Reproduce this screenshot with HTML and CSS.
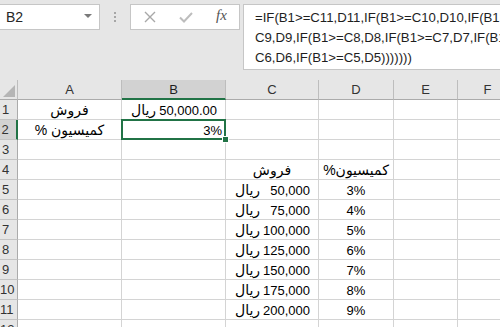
FILE: index.html
```html
<!DOCTYPE html>
<html>
<head>
	<title>Book1 - Excel</title>
	<link rel="stylesheet" href="styles.css">
</head>
<body>
	<div class="bar">
		<div class="namebox"><span>B2</span><i class="caret"></i></div>
		<div class="grip"><i></i><i></i><i></i></div>
		<div class="btns">
			<svg width="12" height="12" viewBox="0 0 12 12"><path d="M1 1L11 11M11 1L1 11" stroke="#a8a8a8" stroke-width="1.4" fill="none"/></svg>
			<svg width="14" height="11" viewBox="0 0 14 11"><path d="M1 5.5L5 9.5L13 1" stroke="#bdbdbd" stroke-width="2" fill="none"/></svg>
			<span class="fx">fx</span>
		</div>
		<div class="formula">
			<div>=IF(B1&gt;=C11,D11,IF(B1&gt;=C10,D10,IF(B1&gt;=</div>
			<div>C9,D9,IF(B1&gt;=C8,D8,IF(B1&gt;=C7,D7,IF(B1&gt;=</div>
			<div>C6,D6,IF(B1&gt;=C5,D5)))))))</div>
		</div>
	</div>

	<div class="sheet">
		<!-- column headers -->
		<div class="hd corner"><i></i></div>
		<div class="hd">A</div>
		<div class="hd on">B</div>
		<div class="hd">C</div>
		<div class="hd">D</div>
		<div class="hd">E</div>
		<div class="hd">F</div>

		<div class="rh">1</div>
		<div class="c mid fa">فروش</div>
		<div class="c acc"><span class="fa">ریال</span><span>50,000.00</span></div>
		<div class="c"></div><div class="c"></div><div class="c"></div><div class="c"></div>

		<div class="rh on">2</div>
		<div class="c mid fa" dir="rtl">کمیسیون %</div>
		<div class="c right sel">3%</div>
		<div class="c"></div><div class="c"></div><div class="c"></div><div class="c"></div>

		<div class="rh">3</div>
		<div class="c"></div><div class="c"></div><div class="c"></div><div class="c"></div><div class="c"></div><div class="c"></div>

		<div class="rh">4</div>
		<div class="c"></div><div class="c"></div>
		<div class="c mid fa">فروش</div>
		<div class="c mid fa" dir="rtl">کمیسیون%</div>
		<div class="c"></div><div class="c"></div>

		<div class="rh">5</div>
		<div class="c"></div><div class="c"></div>
		<div class="c acc"><span class="fa">ریال</span><span>50,000</span></div>
		<div class="c mid">3%</div>
		<div class="c"></div><div class="c"></div>

		<div class="rh">6</div>
		<div class="c"></div><div class="c"></div>
		<div class="c acc"><span class="fa">ریال</span><span>75,000</span></div>
		<div class="c mid">4%</div>
		<div class="c"></div><div class="c"></div>

		<div class="rh">7</div>
		<div class="c"></div><div class="c"></div>
		<div class="c acc"><span class="fa">ریال</span><span>100,000</span></div>
		<div class="c mid">5%</div>
		<div class="c"></div><div class="c"></div>

		<div class="rh">8</div>
		<div class="c"></div><div class="c"></div>
		<div class="c acc"><span class="fa">ریال</span><span>125,000</span></div>
		<div class="c mid">6%</div>
		<div class="c"></div><div class="c"></div>

		<div class="rh">9</div>
		<div class="c"></div><div class="c"></div>
		<div class="c acc"><span class="fa">ریال</span><span>150,000</span></div>
		<div class="c mid">7%</div>
		<div class="c"></div><div class="c"></div>

		<div class="rh">10</div>
		<div class="c"></div><div class="c"></div>
		<div class="c acc"><span class="fa">ریال</span><span>175,000</span></div>
		<div class="c mid">8%</div>
		<div class="c"></div><div class="c"></div>

		<div class="rh">11</div>
		<div class="c"></div><div class="c"></div>
		<div class="c acc"><span class="fa">ریال</span><span>200,000</span></div>
		<div class="c mid">9%</div>
		<div class="c"></div><div class="c"></div>

		<div class="rh">12</div>
		<div class="c"></div><div class="c"></div><div class="c"></div><div class="c"></div><div class="c"></div><div class="c"></div>
	</div>
</body>
</html>
```

FILE: styles.css
```css
body {
	margin:0;
	width:500px;
	height:327px;
	overflow:hidden;
	background:#e6e6e6;
	font-family:"Liberation Sans","DejaVu Sans",sans-serif;
	color:#000;
}

/* formula bar */
.bar {
	display:flex;
	align-items:flex-start;
	height:76px;
	padding-top:4px;
}
.namebox {
	box-sizing:border-box;
	width:101px;
	height:26px;
	margin-left:-1px;
	padding:0 7px 0 6px;
	display:flex;
	align-items:center;
	justify-content:space-between;
	background:#fff;
	border:1px solid #c6c6c6;
	font-size:14px;
	color:#262626;
}
.caret {
	width:0;
	height:0;
	border-left:4px solid transparent;
	border-right:4px solid transparent;
	border-top:4px solid #7a7a7a;
	margin-top:-2px;
}
.grip {
	width:30px;
	height:26px;
	display:flex;
	flex-direction:column;
	align-items:center;
	justify-content:center;
	gap:2px;
}
.grip i {
	width:2px;
	height:2px;
	background:#a6a6a6;
}
.btns {
	box-sizing:border-box;
	width:110px;
	height:26px;
	padding-left:13px;
	display:flex;
	align-items:center;
	gap:23px;
	background:#fff;
	border:1px solid #c6c6c6;
}
.fx {
	font-family:"Liberation Serif",serif;
	font-style:italic;
	font-size:15px;
	color:#555;
	margin-top:-3px;
}
.formula {
	box-sizing:border-box;
	flex:1;
	height:66px;
	margin:0 -6px 0 3px;
	padding:3px 0 0 11px;
	background:#fff;
	border:1px solid #c6c6c6;
	font-size:13.2px;
	line-height:20px;
	white-space:nowrap;
	overflow:hidden;
	color:#1e1e1e;
}

/* grid */
.sheet {
	display:grid;
	grid-template-columns:18px 104px 104px 93px 75px 64px 60px;
	grid-auto-rows:20px;
	font-size:13px;
}
.sheet > div {
	box-sizing:border-box;
	border-right:1px solid #d4d4d4;
	border-bottom:1px solid #d4d4d4;
	white-space:nowrap;
	overflow:hidden;
}
.hd {
	background:#e6e6e6;
	text-align:center;
	line-height:19px;
	color:#333;
	border-right-color:#bdbdbd !important;
	border-bottom-color:#ababab !important;
}
.hd.on {
	background:#d2d2d2;
	border-bottom:2px solid #217346 !important;
	color:#1e1e1e;
}
.corner {
	position:relative;
}
.corner i {
	position:absolute;
	right:2px;
	bottom:2px;
	width:0;
	height:0;
	border-left:12px solid transparent;
	border-bottom:12px solid #b5b5b5;
}
.rh {
	background:#e6e6e6;
	padding-right:6px;
	text-align:center;
	line-height:20px;
	color:#333;
	border-right-color:#ababab !important;
	border-bottom-color:#c4c4c4 !important;
}
.rh.on {
	background:#d2d2d2;
	border-right:2px solid #217346 !important;
}
.c {
	background:#fff;
	padding:2px 3px 0;
	line-height:17px;
}
.fa {
	font-size:14px;
}
.mid {
	text-align:center;
}
.right {
	text-align:right;
}
.acc {
	display:flex;
	justify-content:space-between;
	padding-left:9px;
	padding-right:8px;
}
.sel {
	position:relative;
	overflow:visible !important;
	z-index:2;
}
.sel::after {
	content:"";
	position:absolute;
	left:-1px;
	top:-1px;
	right:-1px;
	bottom:-1px;
	border:2px solid #217346;
}
.sel::before {
	content:"";
	position:absolute;
	right:-4px;
	bottom:-4px;
	width:5px;
	height:5px;
	background:#217346;
	border:1px solid #fff;
	z-index:1;
}
```
